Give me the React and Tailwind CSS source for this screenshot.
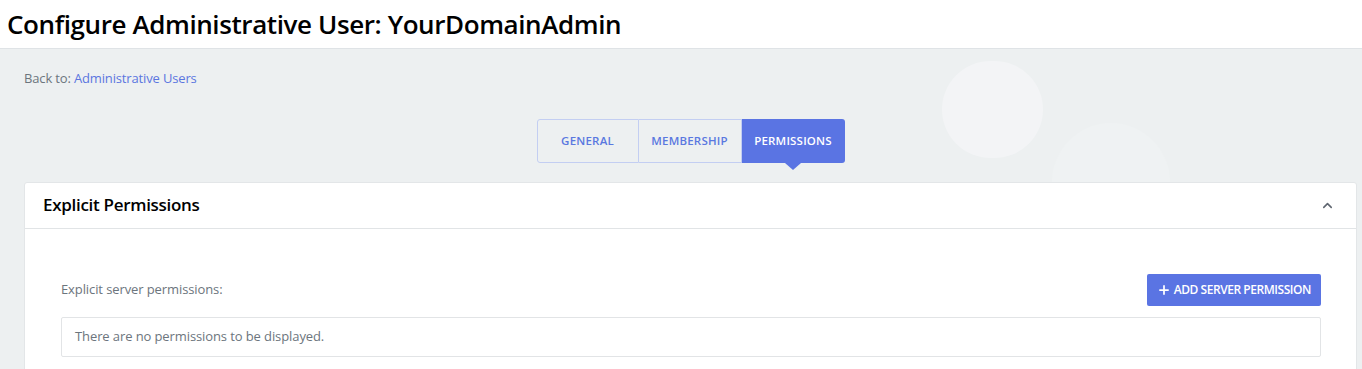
import { ChevronUp, Plus } from "lucide-react";

function Tabs() {
  return (
    <div className="flex justify-center">
      <div className="flex h-[44px] text-[11.5px] font-semibold">
        <button className="w-[102px] border border-[#c3cef2] rounded-l-[3px] text-[#5a78e0] uppercase tracking-[0.2px]">
          General
        </button>
        <button className="w-[103px] border-y border-r border-[#c3cef2] text-[#5a78e0] uppercase tracking-[0.2px]">
          Membership
        </button>
        <button className="relative w-[103px] bg-[#5a74e3] rounded-r-[3px] text-white uppercase tracking-[0.2px]">
          Permissions
          <span className="absolute left-1/2 -bottom-[7px] -translate-x-1/2 w-0 h-0 border-l-[8px] border-r-[8px] border-t-[7px] border-l-transparent border-r-transparent border-t-[#5a74e3]"></span>
        </button>
      </div>
    </div>
  );
}

export default function App() {
  return (
    <div
      className="min-h-[369px] bg-[#edf0f1] overflow-hidden"
      style={{ fontFamily: '"Open Sans", "Noto Sans", sans-serif' }}
    >
      <div className="h-[49px] bg-white border-b border-[#dfe3e6] flex items-center px-[7px]">
        <h1 className="text-[26px] font-semibold text-black tracking-[-0.4px] leading-none">
          Configure Administrative User: YourDomainAdmin
        </h1>
      </div>

      <div className="relative pl-[24px] pr-[5px]">
        <div className="absolute left-[942px] top-[12px] w-[101px] h-[97px] rounded-full bg-[#f3f4f6]"></div>
        <div className="absolute left-[1052px] top-[74px] w-[118px] h-[118px] rounded-full bg-[#eff2f3]"></div>

        <div className="relative pt-[20px] text-[13px] text-[#6c757d] tracking-[-0.15px]">
          Back to: <a className="text-[#5b76e0]">Administrative Users</a>
        </div>

        <div className="relative mt-[30px]">
          <Tabs />
        </div>

        <div className="relative mt-[19px] bg-white border border-[#e3e6e8] rounded-t-[3px]">
          <div className="h-[46px] flex items-center justify-between pl-[18px] pr-[21px] border-b border-[#e1e4e6]">
            <h2 className="text-[17px] font-semibold text-black tracking-[-0.3px]">
              Explicit Permissions
            </h2>
            <ChevronUp size={15} strokeWidth={2.5} className="text-[#5f6670]" />
          </div>
          <div className="pt-[45px] pl-[36px] pr-[35px] pb-[30px]">
            <div className="flex items-center justify-between">
              <span className="text-[13px] text-[#6c757d] tracking-[-0.1px]">
                Explicit server permissions:
              </span>
              <button className="h-[32px] pl-[10px] pr-[10px] bg-[#5a74e3] rounded-[2px] text-white text-[12px] font-semibold uppercase flex items-center gap-[3px] tracking-[-0.45px]">
                <Plus size={14} strokeWidth={3} />
                Add Server Permission
              </button>
            </div>
            <div className="mt-[11px] h-[40px] border border-[#e2e4e6] rounded-[2px] flex items-center px-[13px] text-[13px] text-[#6c757d] tracking-[-0.1px]">
              There are no permissions to be displayed.
            </div>
          </div>
        </div>
      </div>
    </div>
  );
}
